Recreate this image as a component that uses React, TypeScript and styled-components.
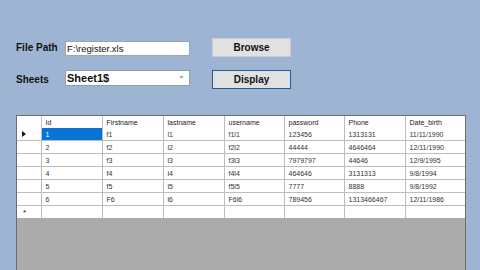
import React from 'react'
import styled, { createGlobalStyle } from 'styled-components'

const Global = createGlobalStyle`
  html, body { margin: 0; padding: 0; }
  body { background: #9db5d2; font-family: "Liberation Sans", Arial, sans-serif; }
`

const columns = ['Id', 'Firstname', 'lastname', 'username', 'password', 'Phone', 'Date_birth']
const widths = [61, 61, 61, 60, 60, 61, 61]

const rows = [
  ['1', 'f1', 'l1', 'f1l1', '123456', '1313131', '11/11/1990'],
  ['2', 'f2', 'l2', 'f2l2', '44444', '4646464', '12/11/1990'],
  ['3', 'f3', 'l3', 'f3l3', '7979797', '44646', '12/9/1995'],
  ['4', 'f4', 'l4', 'f4l4', '464646', '3131313', '9/8/1994'],
  ['5', 'f5', 'l5', 'f5l5', '7777', '8888', '9/8/1992'],
  ['6', 'F6', 'l6', 'F6l6', '789456', '1313466467', '12/11/1986'],
]

const App = () => {
  return (
    <Page>
      <Global />
      <Form>
        <Label>File Path</Label>
        <TextBox>F:\register.xls</TextBox>
        <Button>Browse</Button>
        <Label>Sheets</Label>
        <Combo>
          <span>Sheet1$</span>
          <Chevron>⌄</Chevron>
        </Combo>
        <Button $focused>Display</Button>
      </Form>
      <Grid>
        <Table>
          <colgroup>
            <col style={{ width: 24 }} />
            {widths.map((w, i) => (
              <col key={i} style={{ width: w }} />
            ))}
          </colgroup>
          <thead>
            <tr>
              <RowHead />
              {columns.map((c) => (
                <Head key={c}>{c}</Head>
              ))}
            </tr>
          </thead>
          <tbody>
            {rows.map((r, i) => (
              <tr key={i}>
                <RowHead>{i === 0 ? <Arrow /> : null}</RowHead>
                {r.map((v, j) => (
                  <Cell key={j} $selected={i === 0 && j === 0}>{v}</Cell>
                ))}
              </tr>
            ))}
            <tr>
              <RowHead><Star>*</Star></RowHead>
              {columns.map((c) => (
                <Cell key={c} />
              ))}
            </tr>
          </tbody>
        </Table>
      </Grid>
    </Page>
  )
}

export default App

const Page = styled.div`
  width: 480px;
  height: 270px;
  overflow: hidden;
  display: flex;
  flex-direction: column;
  padding: 38px 14px 0 16px;
  box-sizing: border-box;
`
const Form = styled.div`
  display: grid;
  grid-template-columns: 49px 147px 79px;
  grid-template-rows: 19px 19px;
  row-gap: 13px;
  align-items: center;
`
const Label = styled.div`
  font-weight: bold;
  font-size: 10px;
  color: #111;
`
const TextBox = styled.div`
  width: 125px;
  height: 15px;
  background: #fff;
  border: 1px solid #9aa6b4;
  box-sizing: border-box;
  font-size: 9.5px;
  line-height: 13px;
  padding-left: 1px;
  color: #111;
  margin-top: 2px;
`
const Combo = styled.div`
  width: 125px;
  height: 16px;
  background: #fff;
  border: 1px solid #8f9fb3;
  box-sizing: border-box;
  font-size: 11px;
  font-weight: bold;
  line-height: 14px;
  padding-left: 1px;
  color: #111;
  display: flex;
  justify-content: space-between;
  margin-top: -3px;
`
const Chevron = styled.span`
  font-weight: normal;
  font-size: 8px;
  color: #555;
  margin-right: 4px;
  line-height: 10px;
`
const Button = styled.div<{ $focused?: boolean }>`
  height: 19px;
  box-sizing: border-box;
  background: #e1e1e1;
  border: 1px solid ${(p) => (p.$focused ? '#1f5d97' : '#c8cdd3')};
  font-size: 10px;
  font-weight: bold;
  color: #111;
  display: flex;
  align-items: center;
  justify-content: center;
`
const Grid = styled.div`
  margin-top: 26px;
  flex: 1;
  background: #ababab;
  border: 1px solid #6d6d6d;
  border-bottom: none;
  overflow: hidden;
`
const Table = styled.table`
  border-collapse: collapse;
  table-layout: fixed;
  width: 449px;
  background: #fff;
  font-size: 7px;
  color: #333;
  td, th {
    height: 12px;
    padding: 0 0 0 4px;
    border: 1px solid #bdbdbd;
    border-top: none;
    border-left: none;
    white-space: nowrap;
    overflow: hidden;
  }
  tr:last-child td, tr:last-child th { border-bottom: none; }
`
const Head = styled.th`
  font-weight: normal;
  text-align: left;
  color: #222;
`
const RowHead = styled.th`
  font-weight: normal;
  text-align: left;
`
const Cell = styled.td<{ $selected?: boolean }>`
  background: ${(p) => (p.$selected ? '#0a74d4' : '#fff')};
  color: ${(p) => (p.$selected ? '#fff' : '#333')};
`
const Arrow = styled.span`
  display: inline-block;
  width: 0;
  height: 0;
  border-top: 3px solid transparent;
  border-bottom: 3px solid transparent;
  border-left: 4px solid #111;
  margin-left: 1px;
`
const Star = styled.span`
  font-size: 8px;
  color: #111;
  margin-left: 2px;
`
